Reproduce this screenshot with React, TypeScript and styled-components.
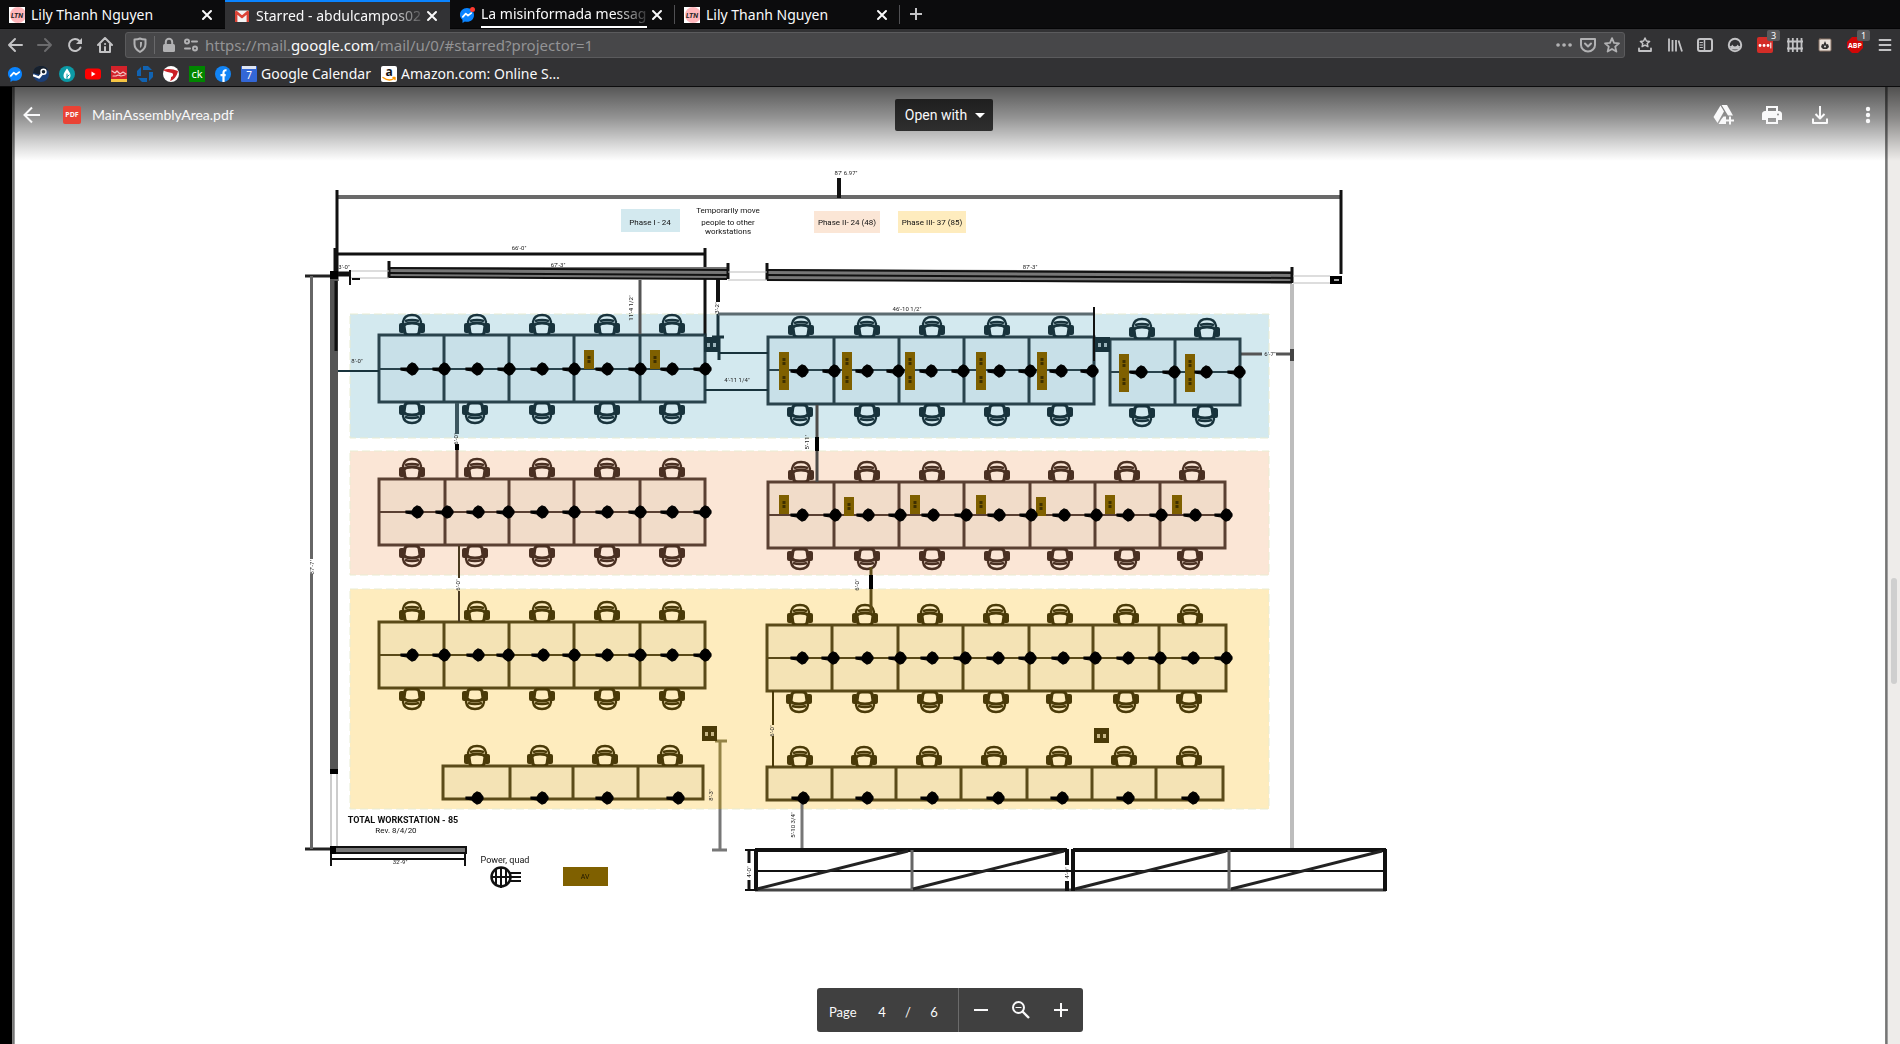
import React from "react";
import styled, { createGlobalStyle, css } from "styled-components";

const GlobalStyle = createGlobalStyle`
  *, *::before, *::after { box-sizing: border-box; }
  html, body { margin: 0; padding: 0; background: #fff; }
  body { font-family: "Noto Sans", "Open Sans", sans-serif; font-size: 14px; color: #f9f9fa; overflow: hidden; }
  button { font: inherit; color: inherit; background: none; border: 0; padding: 0; cursor: pointer; }
  a { color: inherit; text-decoration: none; }
  svg { display: block; flex: none; }
`;

/* ---------- browser chrome ---------- */

const Window = styled.div`
  display: flex;
  flex-direction: column;
  height: 100vh;
`;

const TabStrip = styled.div`
  display: flex;
  align-items: stretch;
  height: 29px;
  background: #0c0c0d;
  border-bottom: 1px solid #050506;
`;

const Tab = styled.div<{ $active?: boolean; $divided?: boolean }>`
  position: relative;
  display: flex;
  align-items: center;
  gap: 6px;
  width: 225px;
  padding: 2px 10px 0 9px;
  ${(p) =>
    p.$active &&
    css`
      background: #323234;
      border-top: 2px solid #0a84ff;
      padding-top: 0;
      margin-bottom: -1px;
    `}
  ${(p) =>
    p.$divided &&
    css`
      &::after {
        content: "";
        position: absolute;
        right: 0;
        top: 5px;
        bottom: 4px;
        width: 1px;
        background: #505053;
      }
    `}
`;

const TabLabel = styled.button<{ $fade?: boolean; $underline?: boolean }>`
  flex: 1;
  min-width: 0;
  height: 25px;
  margin-right: -4px;
  overflow: hidden;
  text-align: left;
  white-space: nowrap;
  font-size: 14px;
  line-height: 22px;
  ${(p) =>
    p.$fade &&
    css`
      > span {
        display: block;
        mask-image: linear-gradient(90deg, #000 calc(100% - 32px), rgba(0, 0, 0, 0.15));
      }
    `}
  ${(p) => p.$underline && "border-bottom: 2px solid #fff;"}
`;

const CloseButton = styled.button`
  display: flex;
  align-items: center;
  justify-content: center;
  width: 16px;
  height: 20px;
`;

const NewTab = styled.button`
  display: flex;
  align-items: center;
  justify-content: center;
  width: 32px;
`;

const NavBar = styled.div`
  display: flex;
  align-items: center;
  gap: 14px;
  height: 32px;
  padding: 0 7px;
  background: #323234;
`;

const NavButton = styled.button`
  position: relative;
  display: flex;
  align-items: center;
  justify-content: center;
  width: 16px;
  height: 24px;
  color: #c3c3c5;
  &:disabled { color: #6b6b6d; }
`;

const AddressBar = styled.div`
  flex: 1;
  display: flex;
  align-items: center;
  gap: 6px;
  height: 26px;
  margin: 0 -2px 0 -2px;
  padding: 0 4px 0 6px;
  background: #474749;
  border: 1px solid #5b5b5d;
  border-radius: 3px;
  color: #b1b1b3;
`;

const BarRule = styled.span`
  width: 1px;
  height: 18px;
  background: #69696b;
`;

const Address = styled.a`
  flex: 1;
  font-size: 15px;
  line-height: 20px;
  color: #939395;
  white-space: nowrap;
  b { font-weight: 400; color: #f9f9fa; }
`;

const PageActions = styled.div`
  display: flex;
  gap: 8px;
`;

const CountBadge = styled.span`
  position: absolute;
  left: 10px;
  top: -3px;
  width: 13px;
  height: 11px;
  border-radius: 2px;
  background: #5a5a5c;
  color: #fff;
  font-size: 9px;
  line-height: 11px;
  text-align: center;
`;

const Bookmarks = styled.nav`
  display: flex;
  align-items: center;
  gap: 10px;
  height: 26px;
  padding: 0 7px 0;
  background: #323234;
  border-bottom: 1px solid #0c0c0d;
`;

const Bookmark = styled.a`
  display: flex;
  align-items: center;
  gap: 4px;
  font-size: 14px;
  line-height: 20px;
  white-space: nowrap;
`;

/* ---------- viewer ---------- */

const Viewer = styled.main`
  position: relative;
  flex: 1;
  min-height: 0;
  display: flex;
  background: #fff;
  font-family: Lato, "Open Sans", sans-serif;
`;

const Backdrop = styled.div`
  width: 12px;
  background: #000;
`;

const Edge = styled.div`
  width: 3px;
  background: linear-gradient(90deg, #8a8a88, #757575, #b5b5b5);
`;

const Stage = styled.section`
  flex: 1;
  display: flex;
  justify-content: center;
  align-items: flex-start;
  padding-top: 74px;
  overflow: hidden;
`;

const Rail = styled.div`
  width: 12px;
  padding: 491px 3px 0 3px;
  background: #eeecea;
`;

const Thumb = styled.div`
  height: 106px;
  border-radius: 3px;
  background: #cfcfcf;
`;

const ViewerHeader = styled.header`
  position: absolute;
  inset: 0 0 auto 12px;
  display: grid;
  grid-template-columns: 1fr auto 1fr;
  align-items: start;
  height: 74px;
  padding: 12px 20px 0 8px;
  background: linear-gradient(180deg, rgba(0, 0, 0, 0.66), rgba(0, 0, 0, 0.42) 42%, rgba(0, 0, 0, 0.1) 85%, transparent);
`;

const HeaderSide = styled.div<{ $end?: boolean }>`
  display: flex;
  align-items: center;
  height: 32px;
  justify-content: ${(p) => (p.$end ? "flex-end" : "flex-start")};
  gap: ${(p) => (p.$end ? "24px" : "0")};
`;

const HeaderButton = styled.button`
  display: flex;
  align-items: center;
  justify-content: center;
  width: 24px;
  height: 24px;
`;

const FileBadge = styled.span`
  width: 18px;
  height: 18px;
  margin: 0 11px 0 19px;
  border-radius: 2px;
  background: #ea4335;
  font: 700 7px/18px "Open Sans", sans-serif;
  text-align: center;
`;

const FileName = styled.h1`
  margin: 0;
  font-size: 14px;
  font-weight: 400;
  line-height: 20px;
`;

const OpenWith = styled.button`
  display: flex;
  align-items: center;
  gap: 8px;
  height: 32px;
  margin-right: 12px;
  padding: 0 8px 0 10px;
  border-radius: 2px;
  background: linear-gradient(180deg, #1f1f1f, #2f2f2f);
  font-family: Roboto, sans-serif;
  font-size: 14px;
  line-height: 20px;
`;

const PageBar = styled.div`
  position: absolute;
  left: 50%;
  bottom: 12px;
  transform: translateX(-50%);
  display: flex;
  align-items: center;
  width: 266px;
  height: 44px;
  border-radius: 3px;
  background: #404040;
  font-size: 13px;
  line-height: 20px;
`;

const PageInfo = styled.div`
  display: flex;
  align-items: center;
  width: 142px;
  height: 44px;
  padding: 3px 0 0 12px;
  border-right: 1px solid #6b6b6b;
  label { width: 40px; }
  span { width: 26px; text-align: center; }
`;

const PageInput = styled.input`
  width: 26px;
  border: 0;
  padding: 0;
  background: transparent;
  color: #fff;
  font: inherit;
  text-align: center;
`;

const ZoomGroup = styled.div`
  flex: 1;
  display: flex;
  justify-content: center;
  gap: 16px;
`;

/* ---------- icons ---------- */

const Icon = ({ size = 16, box = 16, children, label }: { size?: number; box?: number; children: React.ReactNode; label?: string }) => (
  <svg width={size} height={size} viewBox={`0 0 ${box} ${box}`} fill="none" stroke="currentColor" strokeWidth="2" strokeLinecap="round" strokeLinejoin="round" role={label ? "img" : undefined} aria-label={label} aria-hidden={label ? undefined : true}>
    {children}
  </svg>
);

const Glyph = (p: React.SVGProps<SVGTextElement>) => <text stroke="none" textAnchor="middle" {...p} />;

const LtnIcon = () => (
  <Icon>
    <rect width="16" height="16" fill="#fff" stroke="none" />
    <circle cx="9" cy="8" r="8" fill="#ffb6bb" stroke="none" />
    <Glyph x="8" y="11" fill="#222" fontSize="7" fontWeight="700" fontStyle="italic" fontFamily="Roboto">LTN</Glyph>
  </Icon>
);
const GmailIcon = () => (
  <Icon>
    <rect x="1" y="2.500" width="14" height="11.500" rx="1" fill="#f3f3f3" stroke="none" />
    <path d="M2.200 14V4L8 9l5.800-5v10" stroke="#db4437" strokeWidth="2.400" strokeLinecap="butt" />
  </Icon>
);
const MessengerIcon = ({ dot }: { dot?: boolean }) => (
  <Icon>
    <path d="M8 1C4 1 1 4 1 7.700c0 2 .9 3.800 2.500 5V16l2.400-1.500c.7.2 1.400.3 2.100.3 4 0 7-3 7-6.900S12 1 8 1z" fill="#0a84ff" stroke="none" />
    <path d="M3.800 9.800 6.800 6.600l2.200 2 3.200-2.500" stroke="#fff" strokeWidth="1.800" />
    {dot && <circle cx="13.500" cy="2.500" r="2.500" fill="#ff3b30" stroke="none" />}
  </Icon>
);
const CloseIcon = () => (
  <Icon size={12} box={12}><path d="M2 2l8 8M10 2l-8 8" /></Icon>
);

/* ---------- floor plan ---------- */

type Tone = { zone: string; desk: string; line: string };
const BLUE: Tone = { zone: "#d3e9ef", desk: "#c8e0e8", line: "#18333c" };
const PEACH: Tone = { zone: "#fbe6d6", desk: "#f1dcc9", line: "#4a3022" };
const SAND: Tone = { zone: "#feecbe", desk: "#f4e3b5", line: "#4a3a08" };

type Bank = {
  tone: Tone;
  top: number;
  bottom: number;
  mid?: number;
  posts: number[];
  dots: number[];
  dotY: number;
  upper: number[];
  lower?: number[];
};

const BANKS: Bank[] = [
  { tone: BLUE, top: 334, bottom: 401, mid: 368, posts: [379, 444, 509, 574, 640, 705], dots: [412, 444, 477, 509, 542, 574, 607, 640, 672, 705], dotY: 368, upper: [412, 477, 542, 607, 672], lower: [412, 475, 542, 607, 672] },
  { tone: BLUE, top: 336, bottom: 403, mid: 369, posts: [768, 834, 899, 964, 1029, 1094], dots: [802, 834, 867, 898, 931, 963, 999, 1030, 1061, 1092], dotY: 370, upper: [801, 867, 932, 997, 1061], lower: [800, 867, 932, 997, 1060] },
  { tone: BLUE, top: 338, bottom: 404, mid: 371, posts: [1110, 1175, 1240], dots: [1141, 1174, 1206, 1239], dotY: 371, upper: [1142, 1207], lower: [1142, 1205] },
  { tone: PEACH, top: 478, bottom: 544, mid: 511, posts: [379, 445, 509, 574, 640, 705], dots: [417, 447, 478, 508, 542, 574, 607, 640, 672, 705], dotY: 511, upper: [412, 477, 542, 607, 672], lower: [412, 475, 542, 607, 672] },
  { tone: PEACH, top: 481, bottom: 547, mid: 514, posts: [768, 834, 899, 964, 1030, 1095, 1160, 1225], dots: [802, 835, 868, 900, 933, 966, 999, 1031, 1064, 1096, 1128, 1161, 1195, 1226], dotY: 514, upper: [801, 867, 932, 997, 1061, 1127, 1192], lower: [800, 867, 932, 997, 1060, 1127, 1190] },
  { tone: SAND, top: 621, bottom: 687, mid: 654, posts: [379, 444, 509, 574, 640, 705], dots: [412, 444, 478, 508, 543, 574, 607, 640, 672, 705], dotY: 654, upper: [412, 477, 542, 607, 672], lower: [412, 475, 542, 607, 672] },
  { tone: SAND, top: 624, bottom: 690, mid: 657, posts: [767, 832, 898, 963, 1029, 1093, 1159, 1226], dots: [802, 833, 867, 900, 932, 965, 998, 1030, 1063, 1095, 1128, 1160, 1193, 1226], dotY: 657, upper: [800, 865, 930, 996, 1060, 1126, 1190], lower: [799, 865, 930, 996, 1059, 1126, 1189] },
  { tone: SAND, top: 765, bottom: 798, posts: [443, 510, 573, 638, 703], dots: [477, 542, 607, 678], dotY: 797, upper: [477, 540, 605, 670] },
  { tone: SAND, top: 766, bottom: 799, posts: [767, 832, 896, 961, 1027, 1092, 1156, 1223], dots: [803, 867, 932, 998, 1062, 1128, 1193], dotY: 797, upper: [800, 864, 929, 994, 1059, 1124, 1189] },
];

const ZONES = [
  { tone: BLUE, y: 313, h: 124 },
  { tone: PEACH, y: 450, h: 124 },
  { tone: SAND, y: 588, h: 220 },
];

/* x centre, top, height */
const POWER: [number, number, number][] = [
  [589, 349, 19], [655, 349, 19],
  [784, 351, 38], [847, 351, 38], [910, 351, 38], [981, 351, 38], [1042, 351, 38],
  [1124, 353, 38], [1190, 353, 38],
  [784, 494, 19], [849, 496, 19], [915, 494, 19], [981, 494, 19], [1041, 496, 19], [1110, 494, 19], [1177, 494, 19],
];

const Chair = ({ x, y, flip, tone }: { x: number; y: number; flip?: boolean; tone: Tone }) => (
  <g transform={`translate(${x} ${y})${flip ? " scale(1 -1)" : ""}`} stroke={tone.line} strokeWidth="2.400" fill={tone.zone}>
    <path d="M-9-13q1-7 9-7t9 7l-1 4h-16z" />
    <path d="M-7-14q7-2 14 0" fill="none" />
    <rect x="-13" y="-12" width="6" height="10" rx="2" fill={tone.line} stroke="none" />
    <rect x="7" y="-12" width="6" height="10" rx="2" fill={tone.line} stroke="none" />
    <path d="M-8-9q1-3 8-3t8 3l-1 7q-1 2-4 2h-6q-3 0-4-2z" strokeWidth="3" />
  </g>
);

const Dot = ({ x, y }: { x: number; y: number }) => (
  <path d={`M${x - 11} ${y - 1}h6l2-3 3-2 3 1 3 4v2l-3 4-3 1-3-2-2-2-6-1z`} fill="#000" stroke="#000" strokeWidth="1.200" />
);

const Outlet = ({ x, y, tone }: { x: number; y: number; tone: Tone }) => (
  <g>
    <rect x={x} y={y} width="15" height="15" fill={tone.line} />
    <rect x={x + 3} y={y + 6} width="3" height="4" fill={tone.zone} opacity="0.700" />
    <rect x={x + 9} y={y + 6} width="3" height="4" fill={tone.zone} opacity="0.700" />
  </g>
);

const Line = ({ p, w = 2, c = "#111" }: { p: string; w?: number; c?: string }) => <path d={p} stroke={c} strokeWidth={w} fill="none" />;

const PlanSvg = styled.svg`
  filter: blur(0.7px);
  font-family: Roboto, "Open Sans", sans-serif;
  overflow: visible;
`;

const Measure = ({ x, y, turn, children }: { x: number; y: number; turn?: boolean; children: string }) => (
  <text x={x} y={y} fontSize="6" fill="#222" textAnchor="middle" transform={turn ? `rotate(-90 ${x} ${y})` : undefined}>{children}</text>
);

const FloorPlan = () => (
  <PlanSvg width="1300" height="740" viewBox="300 160 1300 740" role="img" aria-label="Main assembly area floor plan">
    {ZONES.map((z) => (
      <rect key={z.y} x="350" y={z.y} width="919" height={z.h} fill={z.tone.zone} stroke="#e9ecd2" strokeDasharray="8 4" />
    ))}

    {/* walls */}
    <Line p="M337 196H1341" w={4} c="#6a6a6a" />
    <Line p="M337 189V280M1341 189V273" w={3} />
    <Line p="M839 177V197" w={4} />
    <Line p="M337 253H705M705 247V336" w={3} />
    <Line p="M335 247V376" w={3} />
    <path d="M389 266H727V278L389 276z" fill="#777" />
    <Line p="M389 267L727 269M389 272L727 274M389 276L727 278" />
    <Line p="M389 260V277M728 262V278" w={3} />
    <path d="M767 268L1292 270V283L767 279z" fill="#777" />
    <Line p="M767 269L1292 272M767 274L1292 277M767 279L1292 281" />
    <Line p="M767 262V279M1292 266V282" w={3} />
    <Line p="M350 270H389M350 277H389M728 271H767M728 279H767M1293 275H1330M1293 282H1330" w={1} c="#bbb" />
    <rect x="1330" y="275" width="12" height="8" fill="#000" />
    <rect x="1334" y="278" width="5" height="2" fill="#aaa" />
    <Line p="M330 273H350" w={5} />
    <Line p="M350 269V284M352 278H360" />
    <Line p="M305 275H337M305 848H335" w={3} c="#222" />
    <Line p="M311.500 275V558M311.500 573V848" w={3} c="#666" />
    <rect x="330" y="270" width="8" height="500" fill="#555" />
    <rect x="330" y="270" width="8" height="8" fill="#000" />
    <Line p="M336 280V350" w={3} />
    <rect x="330" y="768" width="8" height="5" fill="#000" />
    <Line p="M331 773V846M337 773V846" w={1} c="#999" />
    <rect x="331" y="846" width="135" height="6" fill="#777" stroke="#111" strokeWidth="2" />
    <rect x="330" y="845" width="6" height="8" fill="#000" />
    <Line p="M331 858H465M331 853V865M465 853V865" />
    <Line p="M1292 283V849" w={4} c="#bdbdbd" />
    <Line p="M1241 353H1262M1276 353H1292" w={3} c="#555" />
    <Line p="M1292 348V360" w={4} c="#444" />

    {/* desks */}
    {BANKS.map((b, i) => {
      const left = b.posts[0];
      const right = b.posts[b.posts.length - 1];
      return (
        <g key={i}>
          {b.upper.map((x) => <Chair key={x} x={x} y={b.top} tone={b.tone} />)}
          {b.lower?.map((x) => <Chair key={x} x={x} y={b.bottom + 1} flip tone={b.tone} />)}
          <rect x={left} y={b.top} width={right - left} height={b.bottom - b.top} fill={b.tone.desk} />
          <g opacity="0.9">
            <Line p={`M${left} ${b.top}H${right}V${b.bottom}H${left}z` + b.posts.map((x) => `M${x} ${b.top}V${b.bottom}`).join("")} w={3} c={b.tone.line} />
            {b.mid && <Line p={`M${left} ${b.mid}H${right}`} c={b.tone.line} />}
          </g>
        </g>
      );
    })}
    {POWER.map(([x, y, h]) => (
      <g key={`${x}-${y}`}>
        <rect x={x - 5} y={y} width="10" height={h} fill="#7f6000" />
        <path d={h > 20 ? `M${x} ${y + 6}v8M${x} ${y + 24}v8` : `M${x} ${y + 6}v8`} stroke="#3f3000" strokeWidth="3" strokeDasharray="3 1" />
      </g>
    ))}

    {/* dimension runs */}
    <Line p="M640 279V333" w={3} c="#555" />
    <Line p="M718 278V301" w={4} />
    <Line p="M718 313V345M719 336V359M712 336H724" w={3} c={BLUE.line} />
    <Line p="M719 352H768M705 389H768M338 370H379" c={BLUE.line} />
    <Line p="M718 313H1094" w={3} c="#5c6b70" />
    <Line p="M1094 306V360" />
    <Line p="M457 402V433" w={4} c="#3c565f" />
    <Line p="M457 443V478" w={3} c="#5e4538" />
    <Line p="M817 404V437M817 450V481" w={3} c="#4d4b48" />
    <Line p="M817 436V450M871 574V588M457 443V449" w={4} c="#000" />
    <Line p="M871 566V574M871 588V612" w={3} c="#5e4c18" />
    <Line p="M459 545V577M459 590V621" c="#4a3a20" />
    <Line p="M773 690V724M773 735V766" c={SAND.line} />
    <Line p="M720 740V808M715 740H727" w={3} c="#948346" />
    <Line p="M720 808V848M712 849H727" w={3} c="#777" />
    <Line p="M802 800V848" w={3} c="#777" />

    {BANKS.map((b, i) => b.dots.map((x) => <Dot key={`${i}-${x}`} x={x} y={b.dotY} />))}
    <Outlet x={704} y={336} tone={BLUE} />
    <Outlet x={1095} y={336} tone={BLUE} />
    <Outlet x={702} y={725} tone={SAND} />
    <Outlet x={1094} y={727} tone={SAND} />

    {/* racks */}
    <Line p="M755 849H1067M1073 849H1386" w={4} />
    <Line p="M755 889H1386" w={3} c="#444" />
    <Line p="M757 870H1385M745 849H755M745 889H755" />
    <Line p="M756 848V890M1067 848V864M1067 880V890M1073 848V890M1385 848V890" w={4} />
    <Line p="M749 849V862M749 879V889" w={3} />
    <Line p="M912 849V889M1229 849V889" w={3} c="#666" />
    <Line p="M757 888L908 850M913 888L1064 850M1075 888L1226 850M1231 888L1382 850" w={3} c="#222" />

    {/* legend */}
    <rect x="621" y="208" width="59" height="23" fill={BLUE.zone} />
    <rect x="814" y="210" width="66" height="22" fill={PEACH.zone} />
    <rect x="898" y="210" width="68" height="22" fill={SAND.zone} />
    <g fontSize="8" fill="#111" textAnchor="middle">
      <text x="650" y="224">Phase I - 24</text>
      <text x="847" y="224">Phase II- 24 (48)</text>
      <text x="932" y="224">Phase III- 37 (85)</text>
      <text x="728" y="212">Temporarily move</text>
      <text x="728" y="224">people to other</text>
      <text x="728" y="233">workstations</text>
      <text x="403" y="822" fontSize="9" fontWeight="700">TOTAL WORKSTATION - 85</text>
      <text x="396" y="832">Rev. 8/4/20</text>
      <text x="505" y="862" fontSize="9">Power, quad</text>
    </g>
    <circle cx="501" cy="876" r="9.500" fill="#fff" stroke="#111" strokeWidth="2.500" />
    <Line p="M492 876H521M510 872H521M510 880H521M496 867V885M501 866V887M506 867V885" />
    <rect x="563" y="866" width="45" height="19" fill="#7f6000" />
    <text x="585" y="878" fontSize="7" fill="#1c1500" textAnchor="middle">AV</text>

    <Measure x={846} y={174}>87' 6.97"</Measure>
    <Measure x={519} y={249}>66'-0"</Measure>
    <Measure x={558} y={266}>67'-3"</Measure>
    <Measure x={1030} y={268}>87'-3"</Measure>
    <Measure x={344} y={268}>3'-0"</Measure>
    <Measure x={357} y={362}>8'-0"</Measure>
    <Measure x={907} y={310}>46'-10 1/2"</Measure>
    <Measure x={737} y={381}>4'-11 1/4"</Measure>
    <Measure x={1270} y={355}>6'-7"</Measure>
    <Measure x={400} y={863}>32'-9"</Measure>
    <Measure x={633} y={307} turn>11'-4 1/2"</Measure>
    <Measure x={719} y={307} turn>3'-2"</Measure>
    <Measure x={458} y={438} turn>6'-0"</Measure>
    <Measure x={460} y={584} turn>6'-0"</Measure>
    <Measure x={809} y={441} turn>5'-11"</Measure>
    <Measure x={859} y={584} turn>6'-0"</Measure>
    <Measure x={314} y={566} turn>87'-7"</Measure>
    <Measure x={774} y={730} turn>6'-0"</Measure>
    <Measure x={713} y={794} turn>8'-3"</Measure>
    <Measure x={795} y={824} turn>5'-10 3/4"</Measure>
    <Measure x={751} y={871} turn>4'-0"</Measure>
    <Measure x={1069} y={872} turn>4'-0"</Measure>
  </PlanSvg>
);

/* ---------- page ---------- */

export default function App() {
  return (
    <>
      <GlobalStyle />
      <Window>
        <TabStrip>
          <Tab>
            <LtnIcon />
            <TabLabel>Lily Thanh Nguyen</TabLabel>
            <CloseButton aria-label="Close tab"><CloseIcon /></CloseButton>
          </Tab>
          <Tab $active>
            <GmailIcon />
            <TabLabel $fade><span>Starred - abdulcampos02</span></TabLabel>
            <CloseButton aria-label="Close tab"><CloseIcon /></CloseButton>
          </Tab>
          <Tab $divided>
            <MessengerIcon dot />
            <TabLabel $fade $underline><span>La misinformada messag</span></TabLabel>
            <CloseButton aria-label="Close tab"><CloseIcon /></CloseButton>
          </Tab>
          <Tab $divided>
            <LtnIcon />
            <TabLabel>Lily Thanh Nguyen</TabLabel>
            <CloseButton aria-label="Close tab"><CloseIcon /></CloseButton>
          </Tab>
          <NewTab aria-label="New tab">
            <Icon><path d="M8 2v12M2 8h12" strokeLinecap="butt" stroke="#c3c3c5" /></Icon>
          </NewTab>
        </TabStrip>

        <NavBar>
          <NavButton aria-label="Back"><Icon><path d="M15 8H2M8 2L2 8l6 6" /></Icon></NavButton>
          <NavButton aria-label="Forward" disabled><Icon><path d="M1 8h13M8 2l6 6-6 6" /></Icon></NavButton>
          <NavButton aria-label="Reload">
            <Icon><path d="M13.500 10.500A6 6 0 1 1 12.500 4" /><path d="M15 1v6H9z" fill="currentColor" stroke="none" /></Icon>
          </NavButton>
          <NavButton aria-label="Home">
            <Icon><path d="M1 8l7-7 7 7M3 7.500V15h10V7.500" /><path d="M8 10v4" /><path d="M8 7h.1" /></Icon>
          </NavButton>
          <AddressBar>
            <Icon><path d="M8 1.500c2 1 4 1 5.500 1V7c0 4-2 6-5.500 8C4.500 13 2.500 11 2.500 7V2.500c1.500 0 3.500 0 5.500-1z" /><path d="M8 5v6c1.500-1 2-2.500 2-4.500V5z" fill="currentColor" stroke="none" /></Icon>
            <BarRule />
            <Icon><rect x="2" y="7" width="12" height="8" rx="1.500" fill="currentColor" stroke="none" /><path d="M4.800 8V5a3.200 3.200 0 0 1 6.400 0v3" /></Icon>
            <Icon><circle cx="4" cy="4.500" r="2" /><path d="M9 4.500h5M2 11.500h5" /><circle cx="12" cy="11.500" r="2" /></Icon>
            <Address href="#starred">https://mail.<b>google.com</b>/mail/u/0/#starred?projector=1</Address>
            <PageActions>
              <Icon label="Page actions"><path d="M2 8h.1M8 8h.1M14 8h.1" strokeWidth="3.600" /></Icon>
              <Icon label="Save to Pocket"><path d="M1 2h14v6a7 6.500 0 0 1-14 0z" /><path d="M5 6.500l3 3 3-3" /></Icon>
              <Icon label="Bookmark this page"><path d="M8 1.200l2 4.600 5 .5-3.800 3.300 1.200 5L8 12l-4.400 2.600 1.200-5L1 6.300l5-.5z" strokeWidth="1.800" /></Icon>
            </PageActions>
          </AddressBar>
          <NavButton aria-label="Bookmarks menu">
            <Icon><path d="M8 1l1.400 3 3.200.4-2.400 2.100.7 3.200L8 8.100 5.100 9.700l.7-3.200-2.400-2.100L6.600 4z" strokeWidth="1.500" /><path d="M2 11.500V14h12v-2.500" strokeWidth="1.800" /></Icon>
          </NavButton>
          <NavButton aria-label="Library"><Icon><path d="M2 1.500v13M5.500 3v11.500M9 3v11.500M11.500 3.500l3.500 11" strokeLinecap="butt" strokeWidth="1.800" /></Icon></NavButton>
          <NavButton aria-label="Sidebars"><Icon><rect x="1" y="2" width="14" height="12" rx="2" /><path d="M7.500 2v12" strokeWidth="1.500" /><path d="M3 5.500h2.500M3 8h2.500M3 10.500h2.500" strokeWidth="1" /></Icon></NavButton>
          <NavButton aria-label="Account"><Icon><circle cx="8" cy="8" r="6.200" /><path d="M3 9c1 0 2-.5 2.500-1.500C6 10 10 10 10.500 7.500 11 8.500 12 9 13 9l-1 3.500H4z" fill="currentColor" stroke="none" /></Icon></NavButton>
          <NavButton aria-label="Password manager">
            <Icon><rect width="16" height="16" rx="2" fill="#d32d27" stroke="none" /><path d="M3 8.500h.1M7 8.500h.1M11 8.500h.1" stroke="#fff" strokeWidth="2.800" /><path d="M13.800 6v5" stroke="#fff" strokeWidth="1" /></Icon>
            <CountBadge>3</CountBadge>
          </NavButton>
          <NavButton aria-label="Fence"><Icon><path d="M1.500 1v14M5.800 1v14M10.200 1v14M14.500 1v14M0 4.500h16M0 11.500h16" strokeLinecap="butt" strokeWidth="1.800" /></Icon></NavButton>
          <NavButton aria-label="Archive">
            <Icon><rect x="2" y="2" width="12" height="12" rx="1" fill="#e9e2dc" stroke="#8b7466" strokeWidth="1" /><path d="M4 10l1-3 1.500.5L8 4l1.500 3.500L11 7l1 3-2 2H6z" fill="#333" stroke="none" /><circle cx="8" cy="9.500" r="1" fill="#ddd" stroke="none" /></Icon>
          </NavButton>
          <NavButton aria-label="Adblock Plus">
            <Icon><path d="M5 0h6l5 5v6l-5 5H5l-5-5V5z" fill="#d00606" stroke="none" /><Glyph x="8" y="11" fill="#fff" fontSize="7" fontWeight="700" fontFamily="Open Sans">ABP</Glyph></Icon>
            <CountBadge>1</CountBadge>
          </NavButton>
          <NavButton aria-label="Open menu"><Icon><path d="M2.500 3h11M2.500 8h11M2.500 13h11" strokeWidth="1.800" /></Icon></NavButton>
        </NavBar>

        <Bookmarks aria-label="Bookmarks">
          <Bookmark href="#messenger" aria-label="Messenger"><MessengerIcon /></Bookmark>
          <Bookmark href="#steam" aria-label="Steam">
            <Icon><circle cx="8" cy="8" r="8" fill="#1b3f78" stroke="none" /><path d="M0 7a8 8 0 0 1 15-3L8 9z" fill="#16202d" stroke="none" /><path d="M1 9.500l5 2 4-5" stroke="#fff" strokeWidth="2.400" /><circle cx="10.500" cy="5.800" r="2.500" stroke="#fff" strokeWidth="1.400" fill="#16202d" /></Icon>
          </Bookmark>
          <Bookmark href="#mint" aria-label="Mint">
            <Icon><circle cx="8" cy="8" r="8" fill="#0c9aa6" stroke="none" /><path d="M8 2.500c2 3 3.500 4.500 3.500 7a3.500 3.500 0 0 1-7 0c0-2.500 1.500-4 3.500-7z" fill="#fff" stroke="none" /><path d="M8 8v5M8 11l2-2" stroke="#0c9aa6" strokeWidth="1" /></Icon>
          </Bookmark>
          <Bookmark href="#youtube" aria-label="YouTube">
            <Icon><rect y="2.500" width="16" height="11" rx="3" fill="#f00" stroke="none" /><path d="M6.500 5.500v5l4-2.500z" fill="#fff" stroke="none" /></Icon>
          </Bookmark>
          <Bookmark href="#store" aria-label="Store">
            <Icon><rect width="16" height="16" fill="#d3222a" stroke="none" /><rect y="13" width="16" height="3" fill="#f6c544" stroke="none" /><path d="M1 5l3 2 2-2 3 3 3-2 3 2M2 10h3l2-1 3 1 4-1" stroke="#f3c7c7" strokeWidth="1.200" /></Icon>
          </Bookmark>
          <Bookmark href="#chase" aria-label="Chase">
            <Icon><g fill="#1163b2" stroke="none"><path d="M6 0h5l4 4H6z" /><path d="M16 6v5l-4 4V6z" /><path d="M10 16H5l-4-4h9z" /><path d="M0 10V5l4-4v9z" /></g></Icon>
          </Bookmark>
          <Bookmark href="#news" aria-label="News">
            <Icon><circle cx="8" cy="8" r="8" fill="#fff" stroke="none" /><path d="M0 4c5-2 10-1 15 1-1 5-4 9-8 10 1-2 1-3 1-4 2 0 3-3 1-4-3-1-6-1-9-3z" fill="#cc2027" stroke="none" /></Icon>
          </Bookmark>
          <Bookmark href="#creditkarma" aria-label="Credit Karma">
            <Icon><rect width="16" height="16" fill="#008600" stroke="none" /><Glyph x="8" y="12" fill="#fff" fontSize="11" fontFamily="Noto Sans">ck</Glyph></Icon>
          </Bookmark>
          <Bookmark href="#facebook" aria-label="Facebook">
            <Icon><circle cx="8" cy="8" r="8" fill="#1284f5" stroke="none" /><path d="M8.500 16V7c0-2 1-3 3-2.700M5.500 9.200h5.200" stroke="#fff" strokeLinecap="butt" strokeWidth="2.200" /></Icon>
          </Bookmark>
          <Bookmark href="#calendar">
            <Icon><rect width="16" height="16" rx="1" fill="#3367d6" stroke="none" /><rect x="1" width="14" height="3" fill="#dfe5f2" stroke="none" /><Glyph x="8" y="13" fill="#fff" fontSize="10" fontFamily="Noto Sans">7</Glyph></Icon>
            Google Calendar
          </Bookmark>
          <Bookmark href="#amazon">
            <Icon><rect width="16" height="16" rx="2" fill="#fff" stroke="none" /><Glyph x="8" y="10" fill="#111" fontSize="12" fontWeight="700" fontFamily="Open Sans">a</Glyph><path d="M2 11.500c4 3 8 3 11 1M12 11.500h2v2" stroke="#f90" strokeWidth="1.400" /></Icon>
            Amazon.com: Online S…
          </Bookmark>
        </Bookmarks>

        <Viewer>
          <Backdrop />
          <Edge />
          <Stage><FloorPlan /></Stage>
          <Edge />
          <Rail><Thumb /></Rail>
          <ViewerHeader>
            <HeaderSide>
              <HeaderButton aria-label="Close viewer"><Icon size={24} box={24}><path d="M20 12H5M12 4.500L4.500 12l7.500 7.500" strokeLinecap="butt" strokeLinejoin="miter" /></Icon></HeaderButton>
              <FileBadge>PDF</FileBadge>
              <FileName>MainAssemblyArea.pdf</FileName>
            </HeaderSide>
            <OpenWith>
              Open with
              <svg width="10" height="5" viewBox="0 0 10 5" aria-hidden="true"><path d="M0 0h10L5 5z" fill="#fff" /></svg>
            </OpenWith>
            <HeaderSide $end>
              <HeaderButton aria-label="Add to Drive">
                <Icon size={24} box={24}><g fill="currentColor" stroke="none"><path d="M8.500 2.500 12 8.500 5.500 20 1.500 14z" /><path d="M9.500 2h5.500l6 10.500h-5z" /><path d="M11.500 13.500h2.500V21H6.500l3-5z" /><path d="M17 13.500h2v3h3v2h-3v3h-2v-3h-3v-2h3z" /></g></Icon>
              </HeaderButton>
              <HeaderButton aria-label="Print">
                <Icon size={24} box={24}><path fillRule="evenodd" d="M19 8h-1V3H6v5H5c-1.660 0-3 1.340-3 3v6h4v4h12v-4h4v-6c0-1.660-1.340-3-3-3zM8 5h8v3H8V5zm8 14H8v-4h8v4zm2-6.500a1 1 0 1 1 0-2 1 1 0 0 1 0 2z" fill="currentColor" stroke="none" /></Icon>
              </HeaderButton>
              <HeaderButton aria-label="Download">
                <Icon size={24} box={24}><path d="M12 3v12M7.500 11l4.500 4.500 4.500-4.500M5 15.500V20h14v-4.500" strokeLinecap="butt" /></Icon>
              </HeaderButton>
              <HeaderButton aria-label="More actions">
                <Icon size={24} box={24}><g fill="currentColor" stroke="none"><circle cx="12" cy="6" r="2.200" /><circle cx="12" cy="12" r="2.200" /><circle cx="12" cy="18" r="2.200" /></g></Icon>
              </HeaderButton>
            </HeaderSide>
          </ViewerHeader>
          <PageBar>
            <PageInfo>
              <label htmlFor="page">Page</label>
              <PageInput id="page" defaultValue="4" />
              <span>/</span>
              <span>6</span>
            </PageInfo>
            <ZoomGroup>
              <HeaderButton aria-label="Zoom out"><Icon size={24} box={24}><path d="M5 12h14" strokeLinecap="butt" /></Icon></HeaderButton>
              <HeaderButton aria-label="Fit to width"><Icon size={24} box={24}><circle cx="9.500" cy="9.500" r="5.500" /><path d="M13.500 13.500l6.500 6.500" strokeLinecap="butt" strokeWidth="2.400" /><path d="M7 9.500h5" strokeWidth="1.200" /></Icon></HeaderButton>
              <HeaderButton aria-label="Zoom in"><Icon size={24} box={24}><path d="M5 12h14M12 5v14" strokeLinecap="butt" /></Icon></HeaderButton>
            </ZoomGroup>
          </PageBar>
        </Viewer>
      </Window>
    </>
  );
}
